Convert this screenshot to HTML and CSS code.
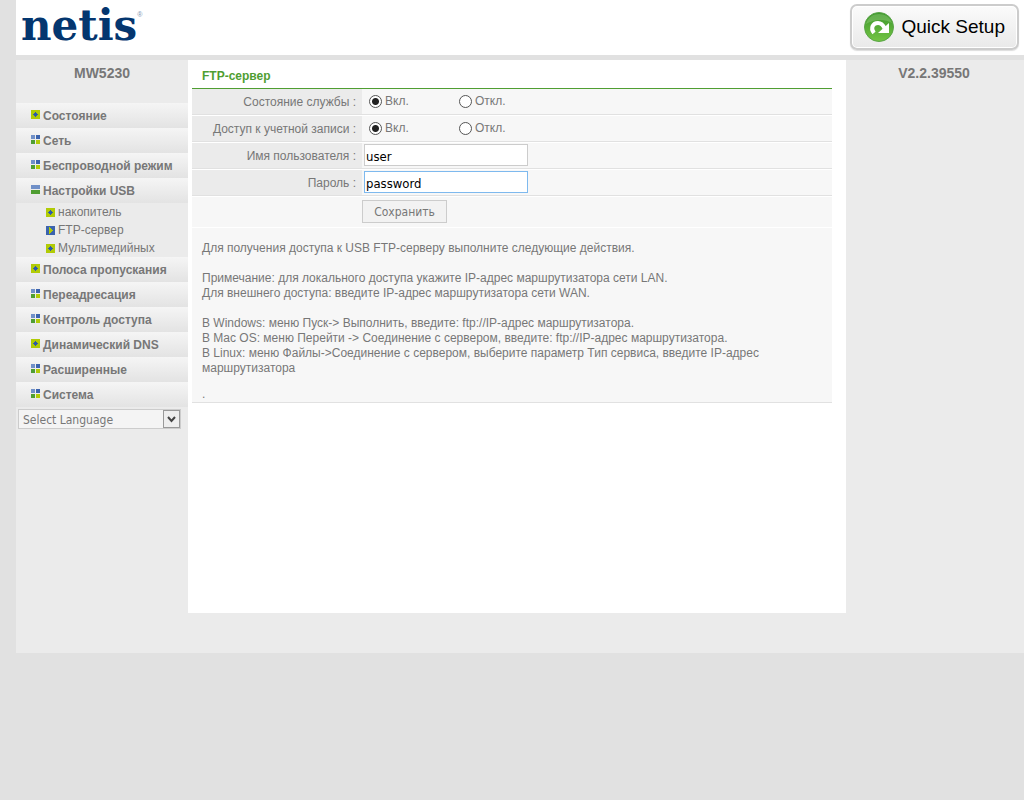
FILE: index.html
```
<!doctype html>
<html lang="ru">
<head>
    <meta charset="UTF-8">
    <meta name="viewport" content="width=device-width, initial-scale=1.0">
    <link rel="stylesheet" href="styles.css">
    <title>netis</title>
</head>
<body>
<svg class="sprite" aria-hidden="true">
    <symbol id="plus" viewBox="0 0 9 9">
        <path fill="#b1cb06" d="M0 0h9v9H0z"/>
        <path fill="#2f5ba8" d="M4 2h1v1h1v1h1v1H6v1H5v1H4V6H3V5H2V4h1V3h1z"/>
    </symbol>
    <symbol id="grid" viewBox="0 0 9 9">
        <path fill="#7090c8" d="M0 0h4v4H0z"/>
        <path fill="#3c64ae" d="M5 0h4v4H5z"/>
        <path fill="#4f9e32" d="M0 5h4v4H0z"/>
        <path fill="#b1cb06" d="M5 5h4v4H5z"/>
    </symbol>
    <symbol id="open" viewBox="0 0 9 9">
        <path fill="#7090c8" d="M0 0h9v4H0z"/>
        <path fill="#4f9e32" d="M0 5h9v4H0z"/>
    </symbol>
    <symbol id="current" viewBox="0 0 9 9">
        <path fill="#3c64ae" d="M0 0h9v9H0z"/>
        <path fill="#b1cb06" d="M3 1h1v1h1v1h1v1h1v1H6v1H5v1H4v1H3z"/>
    </symbol>
</svg>

<div class="page">
    <header class="header">
        <a class="logo" href="#">netis<sup>®</sup></a>
        <button class="quick" type="button">
            <svg width="30" height="30" viewBox="0 0 30 30" aria-hidden="true">
                <defs>
                    <linearGradient id="ball" x1="0" y1="0" x2="0" y2="1">
                        <stop offset="0" stop-color="#3c962c"/>
                        <stop offset="1" stop-color="#74c544"/>
                    </linearGradient>
                </defs>
                <circle cx="15" cy="15" r="14.5" fill="url(#ball)" stroke="#5aa548"/>
                <path fill="#a5d890" opacity=".35" d="M2 12C4 5 9 2 15 2s11 3 13 9C21 7 10 7 2 12z"/>
                <path fill="none" stroke="#fff" stroke-width="4" d="M10 21c-4-5-1-10 4-10 3 0 5 2 6.500 5"/>
                <path fill="#fff" d="M25 11v10H14z"/>
            </svg>
            Quick Setup
        </button>
    </header>

    <div class="main">
        <nav class="sidebar">
            <div class="caption">MW5230</div>
            <ul class="menu">
                <li><a href="#"><svg><use href="#plus"/></svg>Состояние</a></li>
                <li><a href="#"><svg><use href="#grid"/></svg>Сеть</a></li>
                <li><a href="#"><svg><use href="#grid"/></svg>Беспроводной режим</a></li>
                <li>
                    <a href="#"><svg><use href="#open"/></svg>Настройки USB</a>
                    <ul class="submenu">
                        <li><a href="#"><svg><use href="#plus"/></svg>накопитель</a></li>
                        <li><a href="#"><svg><use href="#current"/></svg>FTP-сервер</a></li>
                        <li><a href="#"><svg><use href="#plus"/></svg>Мультимедийных</a></li>
                    </ul>
                </li>
                <li><a href="#"><svg><use href="#plus"/></svg>Полоса пропускания</a></li>
                <li><a href="#"><svg><use href="#grid"/></svg>Переадресация</a></li>
                <li><a href="#"><svg><use href="#grid"/></svg>Контроль доступа</a></li>
                <li><a href="#"><svg><use href="#plus"/></svg>Динамический DNS</a></li>
                <li><a href="#"><svg><use href="#grid"/></svg>Расширенные</a></li>
                <li><a href="#"><svg><use href="#grid"/></svg>Система</a></li>
            </ul>
            <div class="language">
                <select aria-label="Select Language">
                    <option>Select Language</option>
                </select>
                <span class="arrow"><svg width="9" height="7" viewBox="0 0 9 7"><path d="M1 1l3.500 4L8 1" fill="none" stroke="#444" stroke-width="2"/></svg></span>
            </div>
        </nav>

        <main class="content">
            <h1>FTP-сервер</h1>
            <form>
                <div class="row">
                    <span class="label" id="service">Состояние службы :</span>
                    <div class="field" role="radiogroup" aria-labelledby="service">
                        <label><input type="radio" name="service" checked>Вкл.</label>
                        <label><input type="radio" name="service">Откл.</label>
                    </div>
                </div>
                <div class="row">
                    <span class="label" id="account">Доступ к учетной записи :</span>
                    <div class="field" role="radiogroup" aria-labelledby="account">
                        <label><input type="radio" name="account" checked>Вкл.</label>
                        <label><input type="radio" name="account">Откл.</label>
                    </div>
                </div>
                <div class="row">
                    <label class="label" for="user">Имя пользователя :</label>
                    <div class="field"><input class="text" id="user" type="text" value="user"></div>
                </div>
                <div class="row">
                    <label class="label" for="password">Пароль :</label>
                    <div class="field"><input class="text active" id="password" type="text" value="password"></div>
                </div>
                <div class="buttons"><button type="button">Сохранить</button></div>
            </form>
            <div class="note">
                <p>Для получения доступа к USB FTP-серверу выполните следующие действия.</p>
                <p>Примечание: для локального доступа укажите IP-адрес маршрутизатора сети LAN.<br>
                    Для внешнего доступа: введите IP-адрес маршрутизатора сети WAN.</p>
                <p>В Windows: меню Пуск-&gt; Выполнить, введите: ftp://IP-адрес маршрутизатора.<br>
                    В Mac OS: меню Перейти -&gt; Соединение с сервером, введите: ftp://IP-адрес маршрутизатора.<br>
                    В Linux: меню Файлы-&gt;Соединение с сервером, выберите параметр Тип сервиса, введите IP-адрес маршрутизатора</p>
                <p class="end">.</p>
            </div>
        </main>

        <aside class="version caption">V2.2.39550</aside>
    </div>
</div>
</body>
</html>
```
FILE: styles.css
```
* {
    box-sizing: border-box;
}
body {
    margin: 0;
    background: #e1e1e1;
    color: #777;
    font: 12px/15px "Liberation Sans", Arial, sans-serif;
}
a {
    color: inherit;
    text-decoration: none;
}
ul, p, h1 {
    margin: 0;
    padding: 0;
    list-style: none;
}
.sprite {
    display: none;
}
.page {
    margin-left: 16px;
}

.header {
    display: flex;
    justify-content: space-between;
    height: 60px;
    padding: 4px 5px 0;
    background: #fff;
    border-bottom: 5px solid #e1e1e1;
}
.logo {
    display: flex;
    color: #04366f;
    font: bold 42px/44px "DejaVu Serif", serif;
}
.logo sup {
    font: 7px/22px "Liberation Sans", Arial, sans-serif;
    color: #7c93b0;
}
.quick {
    display: flex;
    align-items: center;
    gap: 8px;
    height: 46px;
    padding: 0 12px;
    border: 2px solid #ccc;
    border-radius: 7px;
    background: linear-gradient(#fbfbfb, #e9e9e9);
    box-shadow: inset 0 0 0 1px #fff, 0 1px 1px #ddd;
    color: #000;
    font: 19px "Liberation Sans", Arial, sans-serif;
}

.main {
    display: flex;
    padding-bottom: 40px;
    background: #ebebeb;
}
.caption {
    padding-top: 5px;
    text-align: center;
    font-weight: bold;
    font-size: 14px;
    line-height: 16px;
}
.sidebar {
    flex: 0 0 172px;
}
.version {
    flex: 0 0 178px;
    padding-right: 2px;
}

.menu {
    margin-top: 22px;
    font-weight: bold;
}
.menu a {
    display: flex;
    align-items: center;
    gap: 3px;
    height: 25px;
    padding: 1px 0 0 15px;
    background: linear-gradient(#f5f5f5, #e3e3e3);
}
.menu svg {
    width: 9px;
    height: 9px;
    margin-bottom: 3px;
}
.submenu {
    font-weight: normal;
}
.submenu a {
    height: 18px;
    padding: 0 0 0 30px;
    background: none;
}
.submenu svg {
    margin-bottom: 0;
}
.language {
    position: relative;
    width: 163px;
    margin: 2px 0 0 2px;
}
.language select {
    display: block;
    appearance: none;
    width: 100%;
    height: 20px;
    padding: 1px 4px 0;
    border: 1px solid #ccc;
    border-radius: 0;
    background: #f4f4f4;
    color: #777;
    font: 12px "DejaVu Sans Condensed", "DejaVu Sans", sans-serif;
}
.language .arrow {
    position: absolute;
    top: 1px;
    right: 1px;
    display: flex;
    align-items: center;
    justify-content: center;
    width: 17px;
    height: 18px;
    border: 1px solid #999;
    background: #eee;
    pointer-events: none;
}

.content {
    flex: 1;
    min-height: 553px;
    padding: 0 14px 0 4px;
    background: #fff;
}
.content h1 {
    height: 29px;
    padding: 8px 10px 0;
    border-bottom: 1px solid #4f9e32;
    color: #4f9e32;
    font-size: 12px;
    line-height: 16px;
}
.row {
    display: flex;
    height: 27px;
    border-bottom: 1px solid #fff;
    background: #f7f7f7;
    box-shadow: inset 0 -1px #e1e1e1;
}
.label {
    width: 170px;
    margin-bottom: 1px;
    padding-right: 6px;
    background: #ebebeb;
    line-height: 26px;
    text-align: right;
}
.field {
    display: flex;
    align-items: center;
    padding: 0 2px 2px;
}
.field label {
    display: flex;
    align-items: center;
    width: 90px;
    padding-left: 5px;
}
.field input[type=radio] {
    appearance: none;
    width: 13px;
    height: 13px;
    margin: 0 3px 0 0;
    border: 1px solid #555;
    border-radius: 50%;
    background: #fff;
}
.field input[type=radio]:checked {
    background: radial-gradient(circle, #222 3px, #fff 4px);
}
.field .text {
    width: 164px;
    height: 22px;
    padding: 2px 1px 0;
    border: 1px solid #ccc;
    color: #000;
    font: 13px "DejaVu Sans Condensed", "DejaVu Sans", sans-serif;
}
.field .text.active {
    border-color: #7eb9ee;
    outline: none;
}
.buttons {
    height: 31px;
    padding: 3px 0 0 170px;
    border-bottom: 1px solid #fff;
    background: #f7f7f7;
}
.buttons button {
    width: 85px;
    height: 23px;
    padding: 0;
    border: 1px solid #ccc;
    background: #f2f2f2;
    color: #777;
    font: 12px "DejaVu Sans Condensed", "DejaVu Sans", sans-serif;
}
.note {
    padding: 13px 10px 0;
    border-bottom: 1px solid #e1e1e1;
    background: #f7f7f7;
}
.note p + p {
    margin-top: 15px;
}
.note p.end {
    margin-top: 11px;
}
```
